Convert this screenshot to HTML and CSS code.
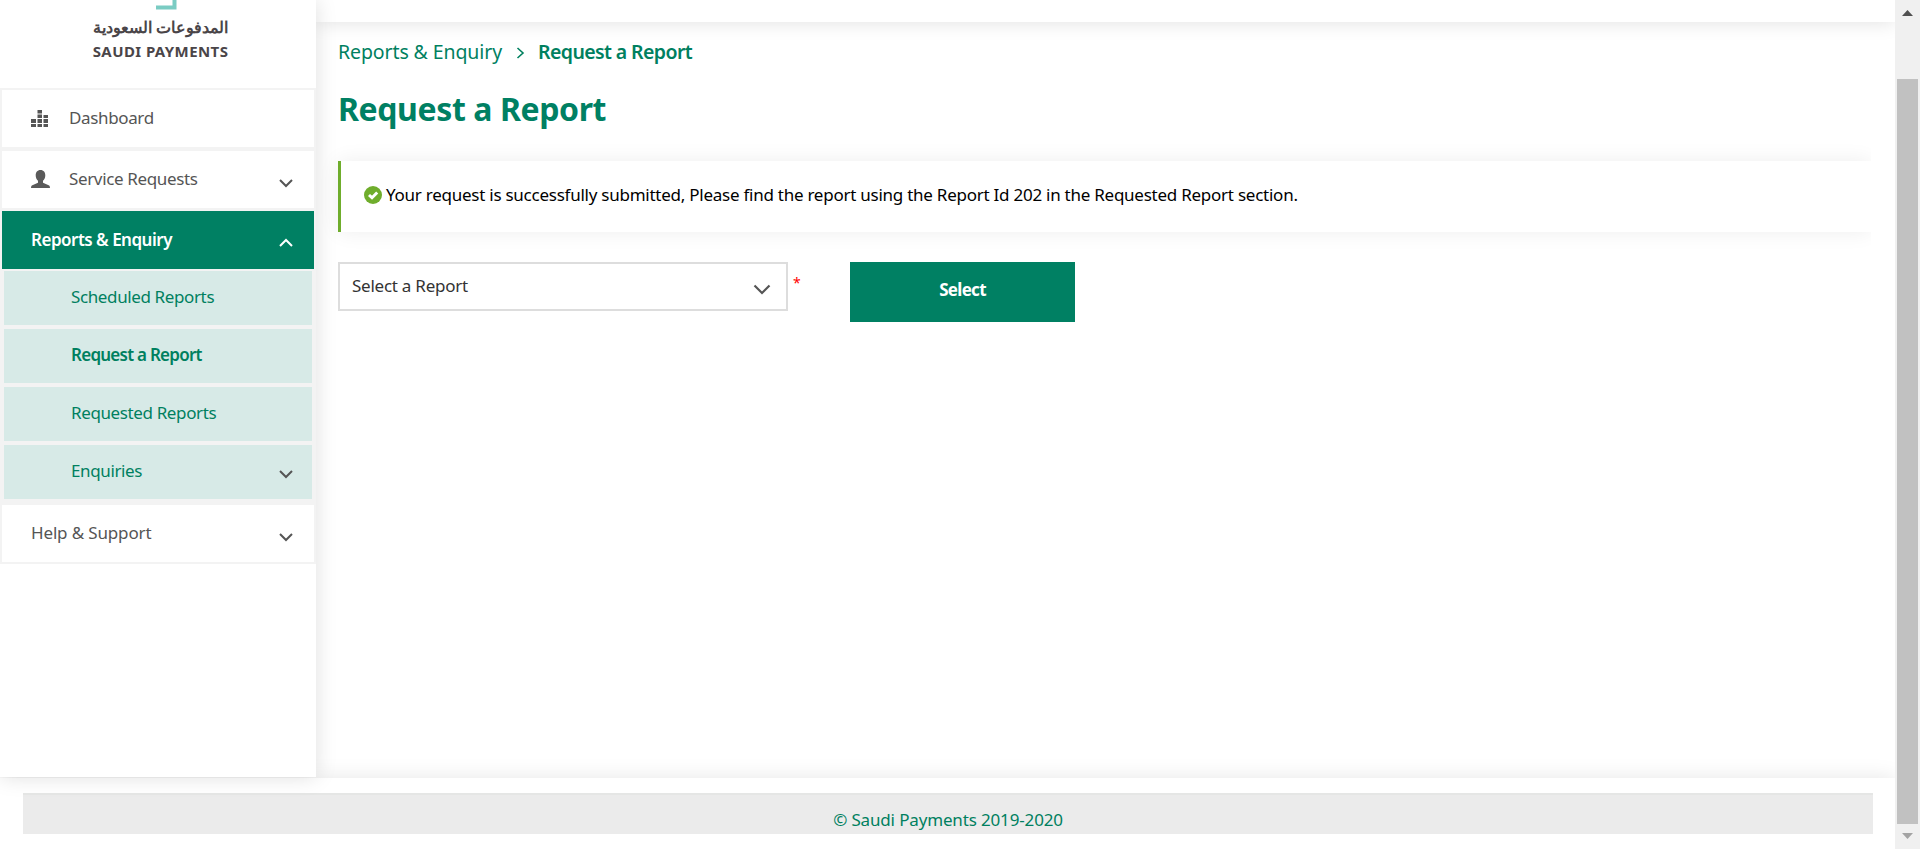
FILE: index.html
```
<!DOCTYPE html>
<html lang="en">
<head>
<meta charset="utf-8">
<title>Request a Report</title>
<link rel="stylesheet" href="styles.css">
</head>
<body>
<div class="app">
  <div class="page">
    <div class="columns">
      <aside class="sidebar">
        <div class="logo">
          <svg class="logo-mark" width="21" height="10" viewBox="0 0 21 10"><path d="M18.500 0V7.500H0" fill="none" stroke="#7accc3" stroke-width="4"/></svg>
          <div class="logo-ar" lang="ar" dir="rtl">المدفوعات السعودية</div>
          <div class="logo-en">SAUDI PAYMENTS</div>
        </div>
        <nav class="menu">
          <a class="item"><svg class="icon bars" width="19" height="19" viewBox="0 0 19 19" fill="#555"><path d="M0 9h5v4H0zM0 14h5v3H0zM6.500 4.500h4.500v3.500H6.500zM6.500 0h4.500v3.500H6.500zM6.500 9h4.500v4H6.500zM6.500 14h4.500v3H6.500zM12.500 5h4.500v3h-4.500zM12.500 9h4.500v4h-4.500zM12.500 14h4.500v3h-4.500z"/></svg><span class="label">Dashboard</span></a>
          <a class="item"><svg class="icon" width="19" height="19" viewBox="0 0 19 19" fill="#5a5a5a"><path d="M9.500 0C6.300 0 4.700 2.300 4.700 5.200c0 2.400.9 4.400 2.300 5.500v2.100L.8 15.600Q0 16.200 0 18h19q0-1.800-.8-2.400L12 12.800v-2.100c1.400-1.100 2.300-3.100 2.300-5.500C14.300 2.300 12.700 0 9.500 0z"/></svg><span class="label">Service Requests</span><svg class="chev" width="14" height="9" viewBox="0 0 14 9"><path d="M1 1l6 6 6-6"/></svg></a>
          <a class="item active"><span class="label">Reports &amp; Enquiry</span><svg class="chev" width="14" height="9" viewBox="0 0 14 9"><path d="M1 8l6-6 6 6"/></svg></a>
          <div class="submenu">
            <a class="sub"><span class="label">Scheduled Reports</span></a>
            <a class="sub current"><span class="label">Request a Report</span></a>
            <a class="sub"><span class="label">Requested Reports</span></a>
            <a class="sub"><span class="label">Enquiries</span><svg class="chev" width="14" height="9" viewBox="0 0 14 9"><path d="M1 1l6 6 6-6"/></svg></a>
          </div>
          <a class="item help"><span class="label">Help &amp; Support</span><svg class="chev" width="14" height="9" viewBox="0 0 14 9"><path d="M1 1l6 6 6-6"/></svg></a>
        </nav>
      </aside>
      <div class="main">
        <header class="topbar"></header>
        <main class="content">
          <div class="crumbs"><span>Reports &amp; Enquiry</span><svg width="9" height="12" viewBox="0 0 9 12"><path d="M1.500 1l5.500 5-5.500 5" fill="none" stroke="#00805f" stroke-width="1.600"/></svg><b>Request a Report</b></div>
          <h1>Request a Report</h1>
          <div class="alert-clip"><div class="alert"><svg width="18" height="18" viewBox="0 0 18 18"><circle cx="9" cy="9" r="9" fill="#6fad2c"/><path d="M5 9l3 2.700L13.200 6.500" fill="none" stroke="#fff" stroke-width="3"/></svg><span>Your request is successfully submitted, Please find the report using the Report Id 202 in the Requested Report section.</span></div></div>
          <div class="form">
            <div class="select"><span>Select a Report</span><svg width="18" height="11" viewBox="0 0 18 11"><path d="M1.500 1.500l7.500 7.500 7.500-7.500" fill="none" stroke="#555" stroke-width="2.200"/></svg></div>
            <span class="required">*</span>
            <button class="btn">Select</button>
          </div>
        </main>
      </div>
    </div>
    <footer class="footer"><div class="footer-bar">© Saudi Payments 2019-2020</div></footer>
  </div>
  <div class="scrollbar">
    <svg width="11" height="6" viewBox="0 0 11 6"><path d="M0 6L5.500 0 11 6z" fill="#505050"/></svg>
    <div class="thumb"></div>
    <svg width="11" height="6" viewBox="0 0 11 6"><path d="M0 0h11L5.500 6z" fill="#a3a3a3"/></svg>
  </div>
</div>
</body>
</html>
```
FILE: styles.css
```
* { box-sizing: border-box; }
body { margin: 0; background: #fff; font-family: "Noto Sans", "Open Sans", sans-serif; font-size: 17px; letter-spacing: -0.25px; color: #555; overflow: hidden; white-space: nowrap; }
.app { display: flex; height: 849px; }
.page { flex: 1; display: flex; flex-direction: column; min-width: 0; }
.columns { display: flex; height: 778px; }

.sidebar { width: 316px; height: 777px; background: #fff; position: relative; z-index: 2; box-shadow: 0 0 20px rgba(0,0,0,.13); flex: none; }
.logo { height: 88px; padding-left: 5px; display: flex; flex-direction: column; align-items: center; color: #4a4548; font-weight: 700; }
.logo-mark { margin-left: 12px; flex: none; }
.logo-ar { font-size: 16px; line-height: 24px; margin-top: 5px; letter-spacing: 0; }
.logo-en { font-size: 15px; line-height: 20px; margin-top: 2px; letter-spacing: .42px; }

.menu { background: #f3f3f3; padding: 2px; }
.item { display: flex; align-items: center; height: 57px; margin-bottom: 4px; padding: 0 21px 0 29px; background: #fff; letter-spacing: -.36px; }
.item .label { margin-top: -2px; }
.icon { margin-right: 19px; }
.bars { margin-top: 2px; }
.item.help { margin-bottom: 0; letter-spacing: -.15px; }
.chev { margin-left: auto; fill: none; stroke: currentColor; stroke-width: 2; margin-top: 8px; }
.item.active { height: 58px; margin: -1px 0 2px; background: #008063; color: #fff; font-weight: 600; letter-spacing: -.5px; }
.active .chev { margin-top: 4px; }
.submenu { padding: 0 2px; display: grid; gap: 4px; margin-bottom: 6px; }
.sub { display: flex; align-items: center; height: 54px; padding: 0 19px 0 67px; background: #d7eae7; color: #00805f; letter-spacing: -.38px; }
.sub .label { margin-top: -3px; }
.sub .chev { color: #555; margin-top: 5px; }
.sub.current { font-weight: 600; letter-spacing: -.75px; }

.main { flex: 1; min-width: 0; display: flex; flex-direction: column; }
.topbar { height: 22px; background: #fff; box-shadow: 0 0 20px rgba(0,0,0,.13); flex: none; }
.content { flex: 1; padding: 0 24px 0 22px; }
.crumbs { display: flex; align-items: center; height: 30px; margin-top: 14px; font-size: 19.5px; letter-spacing: -.1px; color: #00805f; }
.crumbs svg { margin: 3px 13px 0 14px; }
.crumbs b { font-weight: 600; letter-spacing: -.6px; }
h1 { margin: 20px 0 0; font-size: 32px; line-height: 46px; letter-spacing: -.4px; color: #008063; font-weight: 700; }
.alert-clip { overflow: hidden; margin: 9px 0 0 -20px; padding: 20px 0 20px 20px; }
.alert { display: flex; align-items: center; height: 71px; padding: 0 0 4px 23px; border-left: 3px solid #6fad2c; background: #fff; color: #000; box-shadow: 0 0 20px rgba(0,0,0,.07); }
.alert svg { margin-right: 4px; }

.form { display: flex; align-items: flex-start; margin-top: 10px; }
.select { display: flex; align-items: center; justify-content: space-between; width: 450px; height: 49px; padding: 0 15px 2px 12px; border: 2px solid #ddd; color: #333; background: #fff; }
.select svg { margin-top: 8px; }
.required { color: #f00; width: 62px; padding-left: 5px; line-height: 42px; font-size: 14px; }
.btn { width: 225px; height: 60px; padding: 0 0 5px; border: 0; background: #008063; color: #fff; font: 700 17px "Noto Sans", sans-serif; letter-spacing: -.7px; }

.footer { height: 71px; padding: 15px 22px 0 23px; background: #fff; box-shadow: 0 0 20px rgba(0,0,0,.1); position: relative; z-index: 1; }
.footer-bar { height: 41px; border-top: 2px solid #e5e6e5; background: #ebebeb; color: #00805f; text-align: center; line-height: 49px; letter-spacing: -.15px; }

.scrollbar { width: 25px; background: #f0f0f0; display: flex; flex-direction: column; align-items: center; position: relative; z-index: 3; padding-top: 10px; }
.thumb { width: 21px; height: 745px; margin: 63px 0 9px; background: #c1c1c1; flex: none; }
```
